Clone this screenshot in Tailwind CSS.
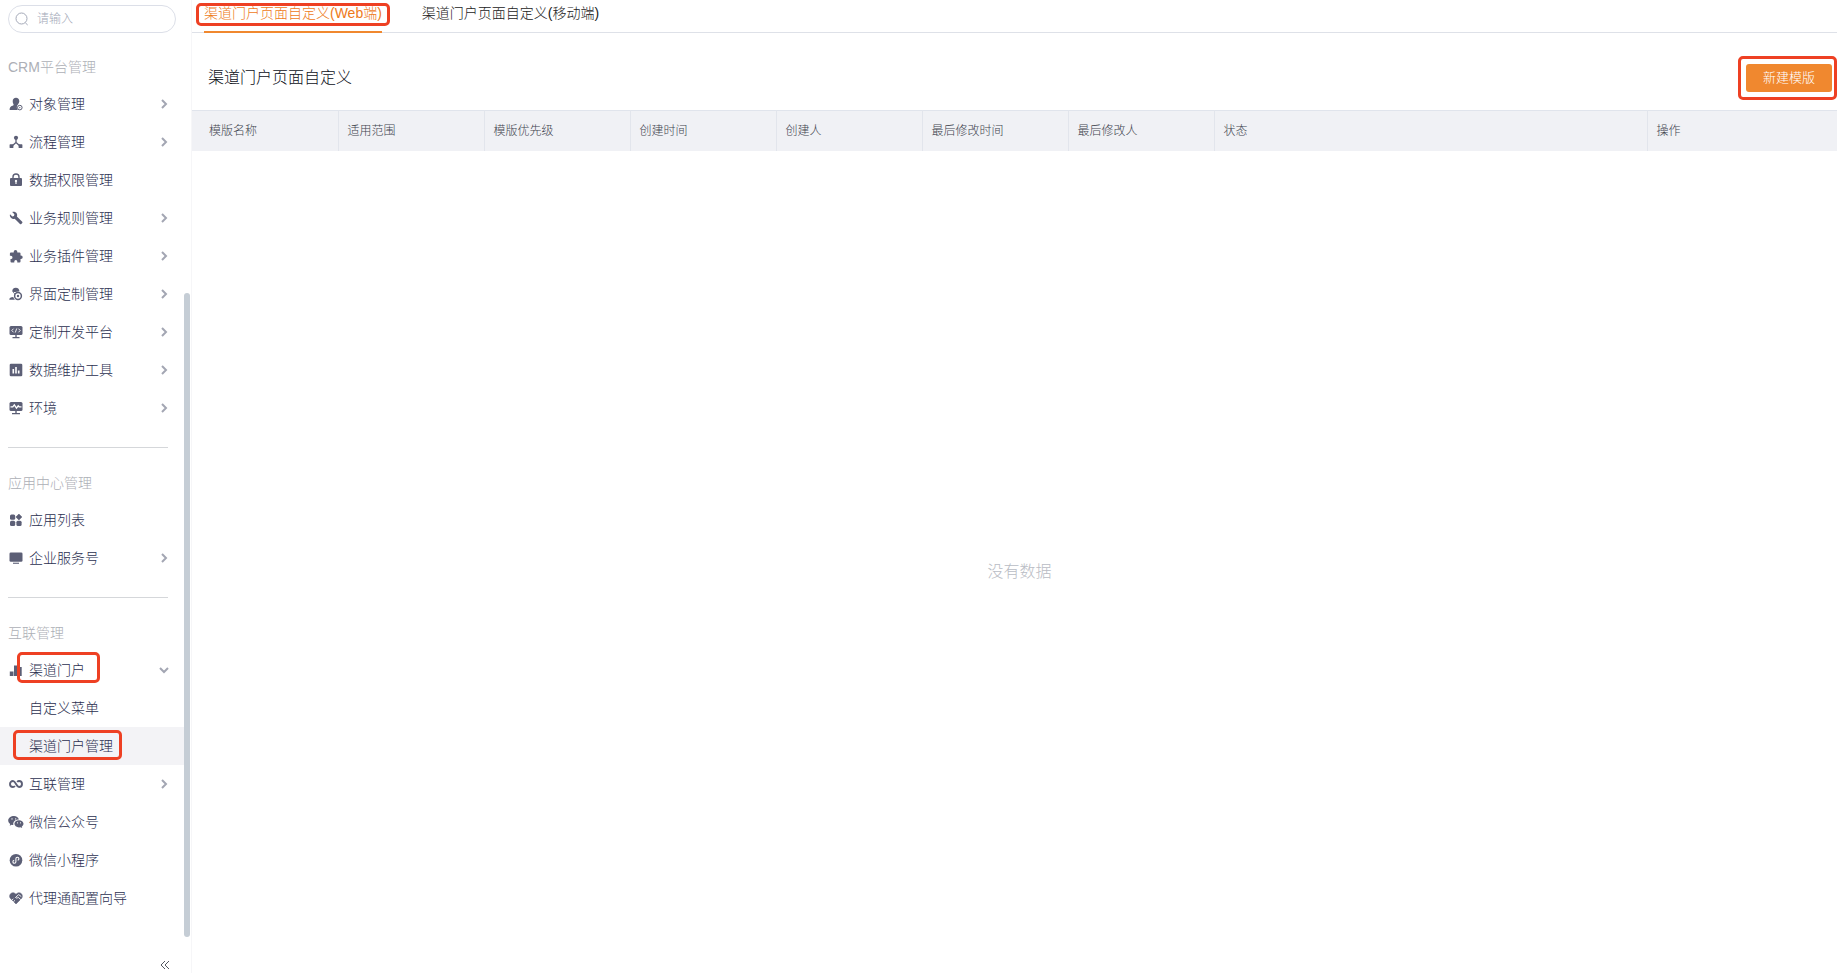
<!DOCTYPE html>
<html lang="zh-CN">
<head>
  <meta charset="UTF-8" />
  <meta name="viewport" content="width=device-width, initial-scale=1.0" />
  <title>渠道门户页面自定义</title>
  <script src="https://cdn.jsdelivr.net/npm/@tailwindcss/browser@4"></script>
</head>
<body class="flex h-screen overflow-hidden bg-white font-['Liberation_Sans','Noto_Sans_CJK_SC',sans-serif] text-sm font-light text-[#2b2f50]">

  <!-- sidebar -->
  <aside class="relative flex w-48 shrink-0 flex-col border-r border-[#f6f6f8]">
    <label class="mx-2 mt-[5px] flex h-7 w-[168px] items-center gap-2 rounded-full border border-[#dcdfe8] px-1.5">
      <svg class="size-3.5 shrink-0 text-[#a4a9b8]" viewBox="0 0 14 14" fill="none" stroke="currentColor" stroke-width="1"><circle cx="6.500" cy="6.500" r="5.500"/><path d="M10.300 10.800l2.400 2.200"/></svg>
      <input type="text" placeholder="请输入" aria-label="搜索" class="w-full min-w-0 text-xs outline-none placeholder:text-[#a4a9b8]" />
    </label>
    <nav id="menu" class="mt-4 w-[184px] flex-1"></nav>
    <div class="absolute top-[293px] bottom-9 left-[184px] w-1.5 rounded-full bg-[#c5cdd5]"></div>
    <button class="mb-0.5 ml-[159px] size-3" aria-label="收起">
      <svg class="size-3" viewBox="0 0 12 12" fill="none" stroke="#545861" stroke-width="1"><path d="M6 2L2 6l4 4M10 2L6 6l4 4"/></svg>
    </button>
  </aside>

  <!-- content -->
  <main class="flex min-w-0 flex-1 flex-col">
    <div class="flex h-[33px] shrink-0 gap-10 border-b border-[#dee1e8] pl-3 leading-5">
      <a href="#" class="relative h-[33px] border-b-2 border-[#f0882f] pt-[3px] text-[#ee7a1a]">渠道门户页面自定义(Web端)
        <span class="absolute top-0 -right-2 -left-2 mt-[3px] h-[23px] rounded-[5px] border-3 border-[#ee4023]"></span>
      </a>
      <a href="#" class="pt-[3px] text-[#222]">渠道门户页面自定义(移动端)</a>
    </div>

    <div class="flex h-[77px] shrink-0 items-center justify-between pt-[13px] pr-[5px] pl-4">
      <h1 class="text-base text-[#0c0f18]">渠道门户页面自定义</h1>
      <div class="relative">
        <button class="block h-7 w-[86px] rounded-[3px] bg-[#f0882f] text-[13px] text-white">新建模版</button>
        <span class="absolute -top-2 -right-[5px] -left-2 h-11 rounded-[5px] border-3 border-[#ee4023]"></span>
      </div>
    </div>

    <table class="w-full table-fixed border-t border-[#e0e4ec] bg-[#f0f1f5] text-left text-xs text-[#40444e]">
      <thead>
        <tr class="h-10">
          <th class="w-[146px] border-r border-[#e2e5ec] pl-[17px] font-light">模版名称</th>
          <th class="w-[146px] border-r border-[#e2e5ec] pl-[9px] font-light">适用范围</th>
          <th class="w-[146px] border-r border-[#e2e5ec] pl-[9px] font-light">模版优先级</th>
          <th class="w-[146px] border-r border-[#e2e5ec] pl-[9px] font-light">创建时间</th>
          <th class="w-[146px] border-r border-[#e2e5ec] pl-[9px] font-light">创建人</th>
          <th class="w-[146px] border-r border-[#e2e5ec] pl-[9px] font-light">最后修改时间</th>
          <th class="w-[146px] border-r border-[#e2e5ec] pl-[9px] font-light">最后修改人</th>
          <th class="border-r border-[#e2e5ec] pl-[9px] font-light">状态</th>
          <th class="w-[190px] pl-[9px] font-light">操作</th>
        </tr>
      </thead>
    </table>

    <div class="flex flex-1 items-center justify-center pt-5 pl-2.5 text-base text-[#b9bcc4]">没有数据</div>
  </main>

  <script>
    const icons = {
      user: '<path d="M7 .8c2 0 3.300 1.500 3.300 3.500 0 1.200-.5 2.100-1.200 2.900-.9.900-1.300 1.900-1.300 3 0 1.100.4 2.100 1.100 2.800H.6c0-2.500.9-3.600 2.900-4.200 1.100-.3 1.400-1 .9-1.700C3.900 6.400 3.700 5.500 3.700 4.300 3.700 2.300 5 .8 7 .8z"/><circle cx="10.800" cy="10.600" r="2.300" fill="none" stroke="currentColor"/><circle cx="10.800" cy="10.600" r=".7"/>',
      flow: '<circle cx="7" cy="2.800" r="2.100"/><path d="M7 4v4M7 7.500l-4 3.500M7 7.500l4 3.500" fill="none" stroke="currentColor" stroke-width="1.300"/><rect x=".6" y="9.300" width="3.800" height="3.800" rx=".6"/><rect x="9.600" y="9.300" width="3.800" height="3.800" rx=".6"/>',
      lock: '<path fill-rule="evenodd" d="M2 5h10a1 1 0 0 1 1 1v6a1 1 0 0 1-1 1H2a1 1 0 0 1-1-1V6a1 1 0 0 1 1-1zm5 1.800a1.200 1.200 0 0 0-.6 2.200v2h1.200V9A1.200 1.200 0 0 0 7 6.800z"/><path d="M4 5.500V4a3 3 0 0 1 6 0v1.500" fill="none" stroke="currentColor" stroke-width="1.400"/>',
      wrench: '<path d="M1 3.200l2.300 2.200 1.700-.4.4-1.700L3.200 1.100c1.700-.7 3.500-.1 4.400 1.200.7 1 .7 2.200.3 3.200l5.300 5.300c.4.400.4.900 0 1.300l-.9.900c-.4.400-.9.400-1.300 0L5.700 7.700c-1.200.5-2.500.3-3.500-.6C1.100 6 .5 4.500 1 3.200z"/>',
      plugin: '<path d="M4.700 3.500V2.700a1.800 1.800 0 0 1 3.600 0v.8h2.200a1 1 0 0 1 1 1v2h.5a1.700 1.700 0 0 1 0 3.400h-.5v2.500a1 1 0 0 1-1 1H8.300v-.8a1.500 1.500 0 0 0-3 0v.8H2.500a1 1 0 0 1-1-1V10h.4a1.600 1.600 0 0 0 0-3.200H.9V4.500a1 1 0 0 1 1-1z"/>',
      custom: '<path d="M3.300 4.800C3 2.300 4.600.8 6.800.8c2.300 0 3.700 1.400 3.600 3.700-1.500-.4-2.700.5-4 .5-1.200.1-2-.5-3.100-.2z"/><path d="M.3 12.800c0-2 1.300-2.500 4-2.700.3 1.100.8 2 1.800 2.700z"/><path d="M4.300 4.500c.2 1.500.9 2 1.700 2.500" fill="none" stroke="currentColor"/><circle cx="9" cy="9" r="3.400" fill="none" stroke="currentColor" stroke-width="1.500"/><circle cx="9" cy="9" r="1.200"/>',
      dev: '<rect x=".5" y="1" width="13" height="9" rx="1.500"/><path d="M6.300 10h1.400v2H6.300zM3.500 12h7v1.200h-7z"/><path d="M4.500 3.700L2.800 5.500l1.700 1.800M9.500 3.700l1.700 1.800-1.700 1.800M7.700 3.500L6.300 7.500" fill="none" stroke="#fff" stroke-width=".9"/>',
      chart: '<rect x=".7" y=".7" width="12.600" height="12.600" rx="1.300"/><path d="M3.500 6h1.600v4.500H3.500zM6.200 4h1.600v6.500H6.200zM8.900 7.500h1.600v3H8.900z" fill="#fff"/>',
      env: '<rect x=".5" y="1" width="13" height="9" rx="1.500"/><path d="M6.300 10h1.400v2H6.300zM3 12h8v1.200H3z"/><path d="M1.500 5.800h2.300l1.500-2 2.200 3.400 1.700-2.400.9 1h2.400" fill="none" stroke="#fff" stroke-width="1.300"/>',
      apps: '<rect x="1" y="1.500" width="5.200" height="5.200" rx="1.500"/><path d="M9.900 1l3 3-3 3-3-3z" stroke="currentColor" stroke-width=".6"/><rect x="1" y="7.800" width="5.200" height="5.200" rx="1.500"/><rect x="7.400" y="7.800" width="5.200" height="5.200" rx="1.500"/>',
      screen: '<rect x=".5" y="1.500" width="13" height="9.200" rx="1.300"/><path d="M4 11.700h6v1.100H4z"/>',
      bars: '<path d="M.8 8.500h3.700V13H.8zM5 2.500h3.700V13H5zM9.200 4h3.500v9H9.200z"/>',
      link: '<path d="M8.200 5C8.800 4.300 9.400 4 10 4a3 3 0 0 1 0 6C7.200 10 6.800 4 4 4a3 3 0 0 0 0 6c.8 0 1.400-.3 1.900-1" fill="none" stroke="currentColor" stroke-width="1.900"/>',
      wechat: '<path fill-rule="evenodd" d="M5 1C1.900 1-.8 2.900-.8 5.500c0 1.500.8 2.700 2 3.500l-.5 1.800 2-1.100c.6.200 1 .2 1.600.2-.5-3.200 2-5.400 5.600-5.400C9.300 2.300 7.400 1 5 1zM3 3.200a.7.700 0 1 1 0 1.400.7.700 0 0 1 0-1.400zm3.700 0a.7.700 0 1 1 0 1.400.7.700 0 0 1 0-1.400z"/><path fill-rule="evenodd" d="M10 5.300c-2.600 0-4.600 1.600-4.600 3.500s2 3.600 4.600 3.600l1.500-.2 1.700.9-.4-1.500c1-.7 1.700-1.700 1.700-2.800 0-1.900-2-3.500-4.500-3.500zM8.500 7.200a.6.600 0 1 1 0 1.200.6.600 0 0 1 0-1.200zm3 0a.6.600 0 1 1 0 1.200.6.600 0 0 1 0-1.200z"/>',
      mini: '<circle cx="7" cy="7.300" r="6.300"/><path d="M5.200 7.300a1.500 1.500 0 1 0 1.700 1.500V5.700a1.500 1.500 0 1 1 1.800 1.500" fill="none" stroke="#fff" stroke-width="1.100"/>',
      agent: '<path d="M7 13L1.500 7.500C-.2 5.500.8 2.500 3 1.900c1.600-.4 3 .2 4 1.400 1-1.200 2.400-1.800 4-1.400 2.200.6 3.200 3.600 1.500 5.600z" stroke="currentColor" stroke-width=".5"/><path d="M12.300 5.600L9.700 3.600 6.500 6.500c.8.900 1.900.6 2.700-.2l2.600 2.300M2.800 9.200l1.500-1.300M4.400 10.800L6 9.300" fill="none" stroke="#fff" stroke-width=".9"/>'
    };

    const menu = [
      { title: "CRM平台管理", items: [
        { name: "对象管理", icon: "user", arrow: true },
        { name: "流程管理", icon: "flow", arrow: true },
        { name: "数据权限管理", icon: "lock" },
        { name: "业务规则管理", icon: "wrench", arrow: true },
        { name: "业务插件管理", icon: "plugin", arrow: true },
        { name: "界面定制管理", icon: "custom", arrow: true },
        { name: "定制开发平台", icon: "dev", arrow: true },
        { name: "数据维护工具", icon: "chart", arrow: true },
        { name: "环境", icon: "env", arrow: true }
      ]},
      { title: "应用中心管理", items: [
        { name: "应用列表", icon: "apps" },
        { name: "企业服务号", icon: "screen", arrow: true }
      ]},
      { title: "互联管理", items: [
        { name: "渠道门户", icon: "bars", open: true,
          mark: "absolute top-px left-[17px] h-[31px] w-[83px] rounded-[5px] border-3 border-[#ee4023]" },
        { name: "自定义菜单" },
        { name: "渠道门户管理", active: true,
          mark: "absolute top-[3px] left-[13px] h-[30px] w-[109px] rounded-[5px] border-3 border-[#ee4023]" },
        { name: "互联管理", icon: "link", arrow: true },
        { name: "微信公众号", icon: "wechat" },
        { name: "微信小程序", icon: "mini" },
        { name: "代理通配置向导", icon: "agent" }
      ]}
    ];

    const right = '<svg class="mr-[14px] ml-auto size-3 text-[#a3a6b3]" viewBox="0 0 12 12" fill="none" stroke="currentColor" stroke-width="2"><path d="M4 2l4 4-4 4"/></svg>';
    const down = '<svg class="mr-[14px] ml-auto size-3 text-[#a3a6b3]" viewBox="0 0 12 12" fill="none" stroke="currentColor" stroke-width="2"><path d="M2 4l4 4 4-4"/></svg>';

    function renderItem(item) {
      return `
        <li>
          <a href="#" class="relative flex h-[38px] items-center gap-1.5 pl-[9px] ${item.active ? "bg-[#f3f3f6]" : ""}">
            <svg class="size-3.5 shrink-0 overflow-visible text-[#5c5f76]" viewBox="0 0 14 14" fill="currentColor">${icons[item.icon] || ""}</svg>
            <span>${item.name}</span>
            ${item.arrow ? right : ""}${item.open ? down : ""}
            ${item.mark ? `<span class="${item.mark}"></span>` : ""}
          </a>
        </li>`;
    }

    document.getElementById("menu").innerHTML = menu.map(group => `
      <h2 class="flex h-9 items-center pl-2 text-[#adafb6]">${group.title}</h2>
      <ul>${group.items.map(renderItem).join("")}</ul>
    `).join('<hr class="mx-2 mt-5 mb-[17px] w-40 border-[#d5d7da]" />');
  </script>
</body>
</html>
